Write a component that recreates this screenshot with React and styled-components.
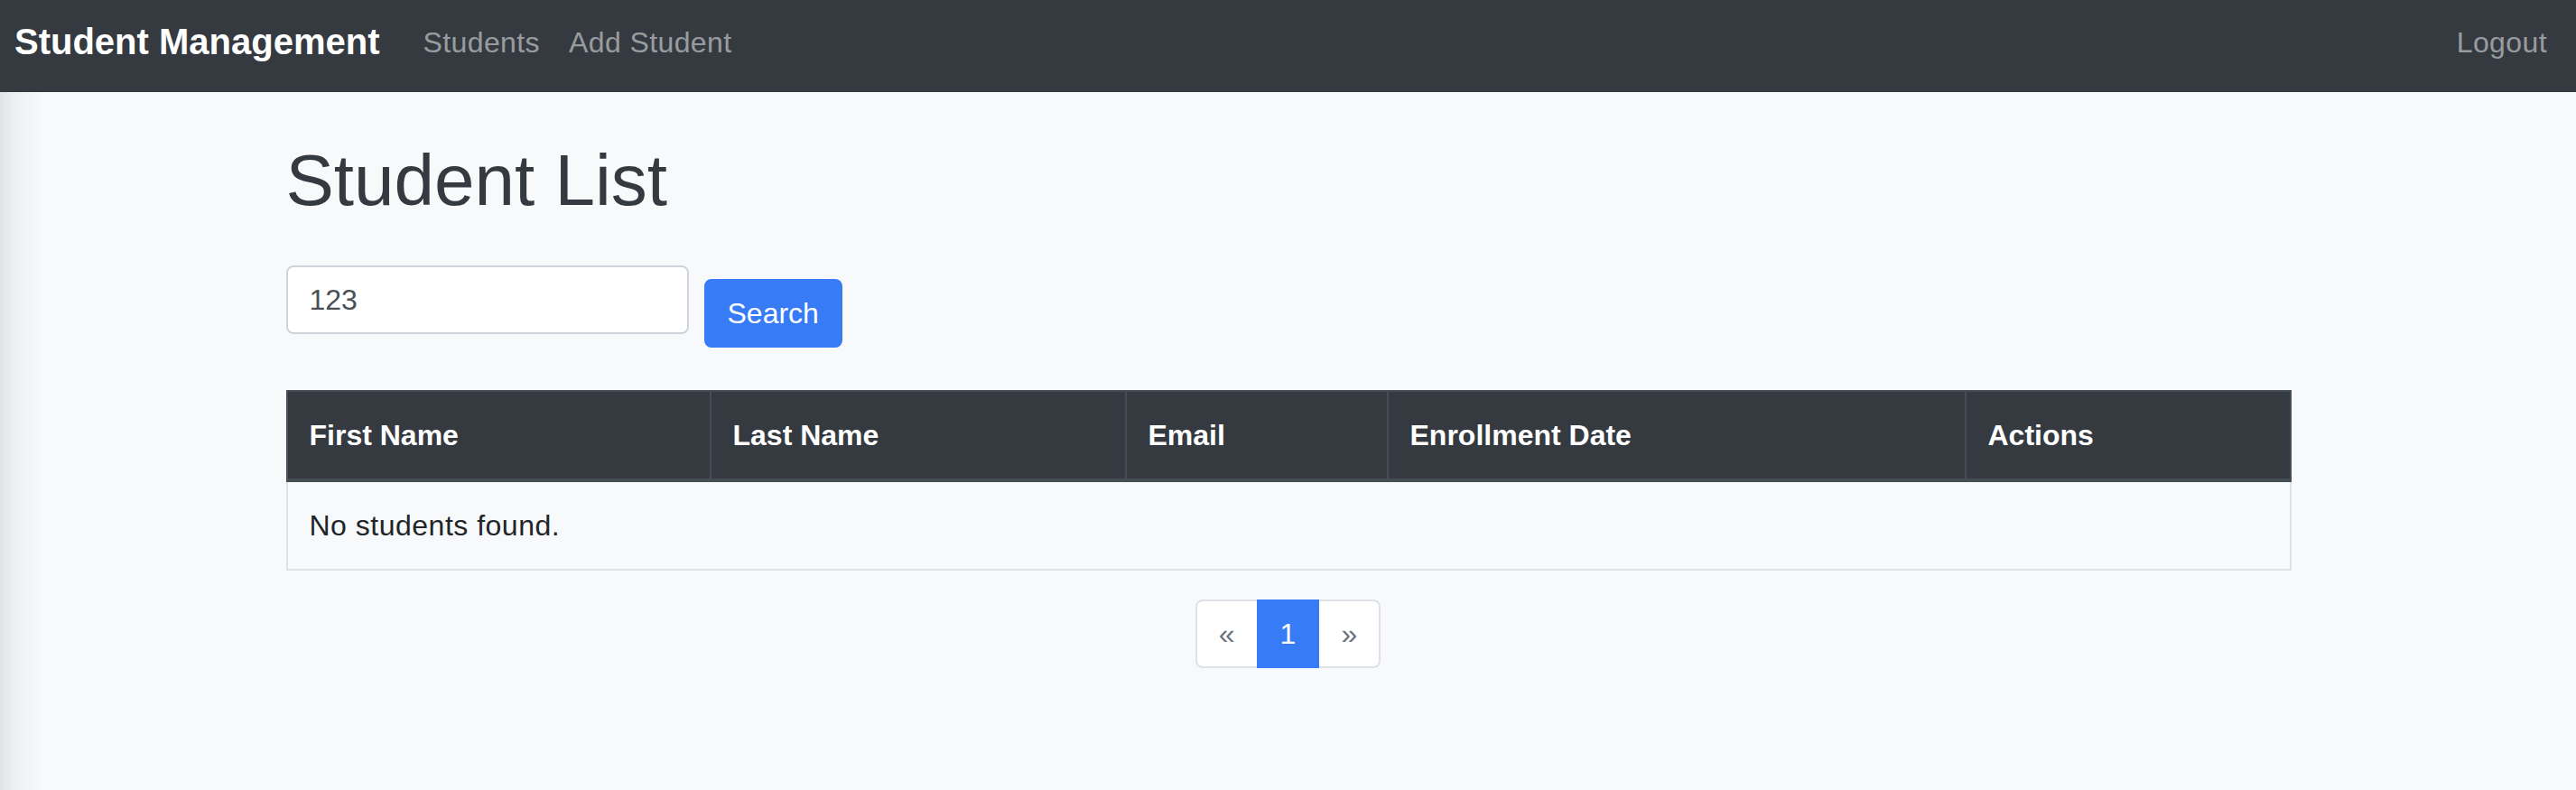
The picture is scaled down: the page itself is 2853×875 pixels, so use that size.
import React from "react";
import styled, { createGlobalStyle } from "styled-components";

const GlobalStyle = createGlobalStyle`
  html, body {
    margin: 0;
    padding: 0;
  }
  body {
    min-height: 875px;
    font-family: "Liberation Sans", Arial, Helvetica, sans-serif;
    color: #212529;
    background: linear-gradient(to right, #e2e3e6 0px, #eeeff1 16px, #f8f9fa 46px) #f8f9fa;
  }
  * { box-sizing: border-box; }
`;

const Navbar = styled.nav`
  display: flex;
  align-items: flex-start;
  height: 102px;
  padding: 0 16px;
  background: #343a40;
`;

const Brand = styled.a`
  margin-top: 16px;
  margin-right: 32px;
  font-size: 40px;
  line-height: 60px;
  font-weight: 700;
  color: #ffffff;
  text-decoration: none;
  white-space: nowrap;
`;

const NavList = styled.div`
  display: flex;
  align-items: flex-start;
  flex: ${(p) => (p.$grow ? 1 : "0 0 auto")};
`;

const NavLink = styled.a`
  margin-top: 23px;
  padding: 0 16px;
  font-size: 32px;
  line-height: 48px;
  letter-spacing: 0.4px;
  color: rgba(255, 255, 255, 0.5);
  text-decoration: none;
  white-space: nowrap;
`;

const Container = styled.main`
  max-width: 2280px;
  margin: 0 auto;
  padding: 0 30px;
`;

const Title = styled.h1`
  margin: 50px 0 46px;
  font-size: 80px;
  line-height: 96px;
  font-weight: 400;
  color: #343a40;
`;

const SearchForm = styled.form`
  display: flex;
  align-items: flex-start;
`;

const SearchInput = styled.input`
  width: 446px;
  height: 76px;
  padding: 12px 24px;
  font-family: inherit;
  font-size: 32px;
  line-height: 48px;
  color: #495057;
  background: #ffffff;
  border: 2px solid #ced4da;
  border-radius: 8px;
  outline: none;
`;

const PrimaryButton = styled.button`
  margin: 15px 0 0 17px;
  height: 76px;
  padding: 12px 24px;
  font-family: inherit;
  font-size: 32px;
  line-height: 48px;
  color: #ffffff;
  background: #377bf6;
  border: 2px solid #377bf6;
  border-radius: 8px;
  cursor: pointer;
`;

const Table = styled.table`
  width: 100%;
  margin-top: 47px;
  border-collapse: collapse;
  table-layout: fixed;
`;

const HeadCell = styled.th`
  width: ${(p) => p.$w}px;
  padding: 24px;
  font-size: 32px;
  line-height: 48px;
  font-weight: 700;
  text-align: left;
  color: #ffffff;
  background: #343a40;
  border: 2px solid #454d55;
  border-bottom-width: 4px;
`;

const BodyCell = styled.td`
  padding: 24px;
  font-size: 32px;
  line-height: 48px;
  letter-spacing: 0.5px;
  color: #212529;
  border: 2px solid #dee2e6;
  border-top: none;
`;

const Pagination = styled.ul`
  display: flex;
  justify-content: center;
  margin: 32px 0 0;
  padding: 0;
  list-style: none;
`;

const PageItem = styled.li`
  margin-left: -2px;
  &:first-child { margin-left: 0; }
  &:first-child > a { border-radius: 8px 0 0 8px; }
  &:last-child > a { border-radius: 0 8px 8px 0; }
`;

const PageLink = styled.a`
  display: block;
  padding: 16px 24px;
  font-size: 32px;
  line-height: 40px;
  text-decoration: none;
  color: ${(p) => (p.$active ? "#ffffff" : "#6c757d")};
  background: ${(p) => (p.$active ? "#377bf6" : "#ffffff")};
  border: 2px solid ${(p) => (p.$active ? "#377bf6" : "#dee2e6")};
  position: relative;
  z-index: ${(p) => (p.$active ? 1 : 0)};
`;

const columns = [
  { label: "First Name", w: 469 },
  { label: "Last Name", w: 460 },
  { label: "Email", w: 290 },
  { label: "Enrollment Date", w: 640 },
  { label: "Actions", w: 360 },
];

export default function App() {
  return (
    <>
      <GlobalStyle />
      <Navbar>
        <Brand href="#">Student Management</Brand>
        <NavList $grow>
          <NavLink href="#">Students</NavLink>
          <NavLink href="#">Add Student</NavLink>
        </NavList>
        <NavList>
          <NavLink href="#">Logout</NavLink>
        </NavList>
      </Navbar>
      <Container>
        <Title>Student List</Title>
        <SearchForm onSubmit={(e) => e.preventDefault()}>
          <SearchInput type="text" defaultValue="123" />
          <PrimaryButton type="submit">Search</PrimaryButton>
        </SearchForm>
        <Table>
          <thead>
            <tr>
              {columns.map((c) => (
                <HeadCell key={c.label} $w={c.w}>
                  {c.label}
                </HeadCell>
              ))}
            </tr>
          </thead>
          <tbody>
            <tr>
              <BodyCell colSpan={5}>No students found.</BodyCell>
            </tr>
          </tbody>
        </Table>
        <Pagination>
          <PageItem>
            <PageLink href="#">«</PageLink>
          </PageItem>
          <PageItem>
            <PageLink href="#" $active>
              1
            </PageLink>
          </PageItem>
          <PageItem>
            <PageLink href="#">»</PageLink>
          </PageItem>
        </Pagination>
      </Container>
    </>
  );
}
